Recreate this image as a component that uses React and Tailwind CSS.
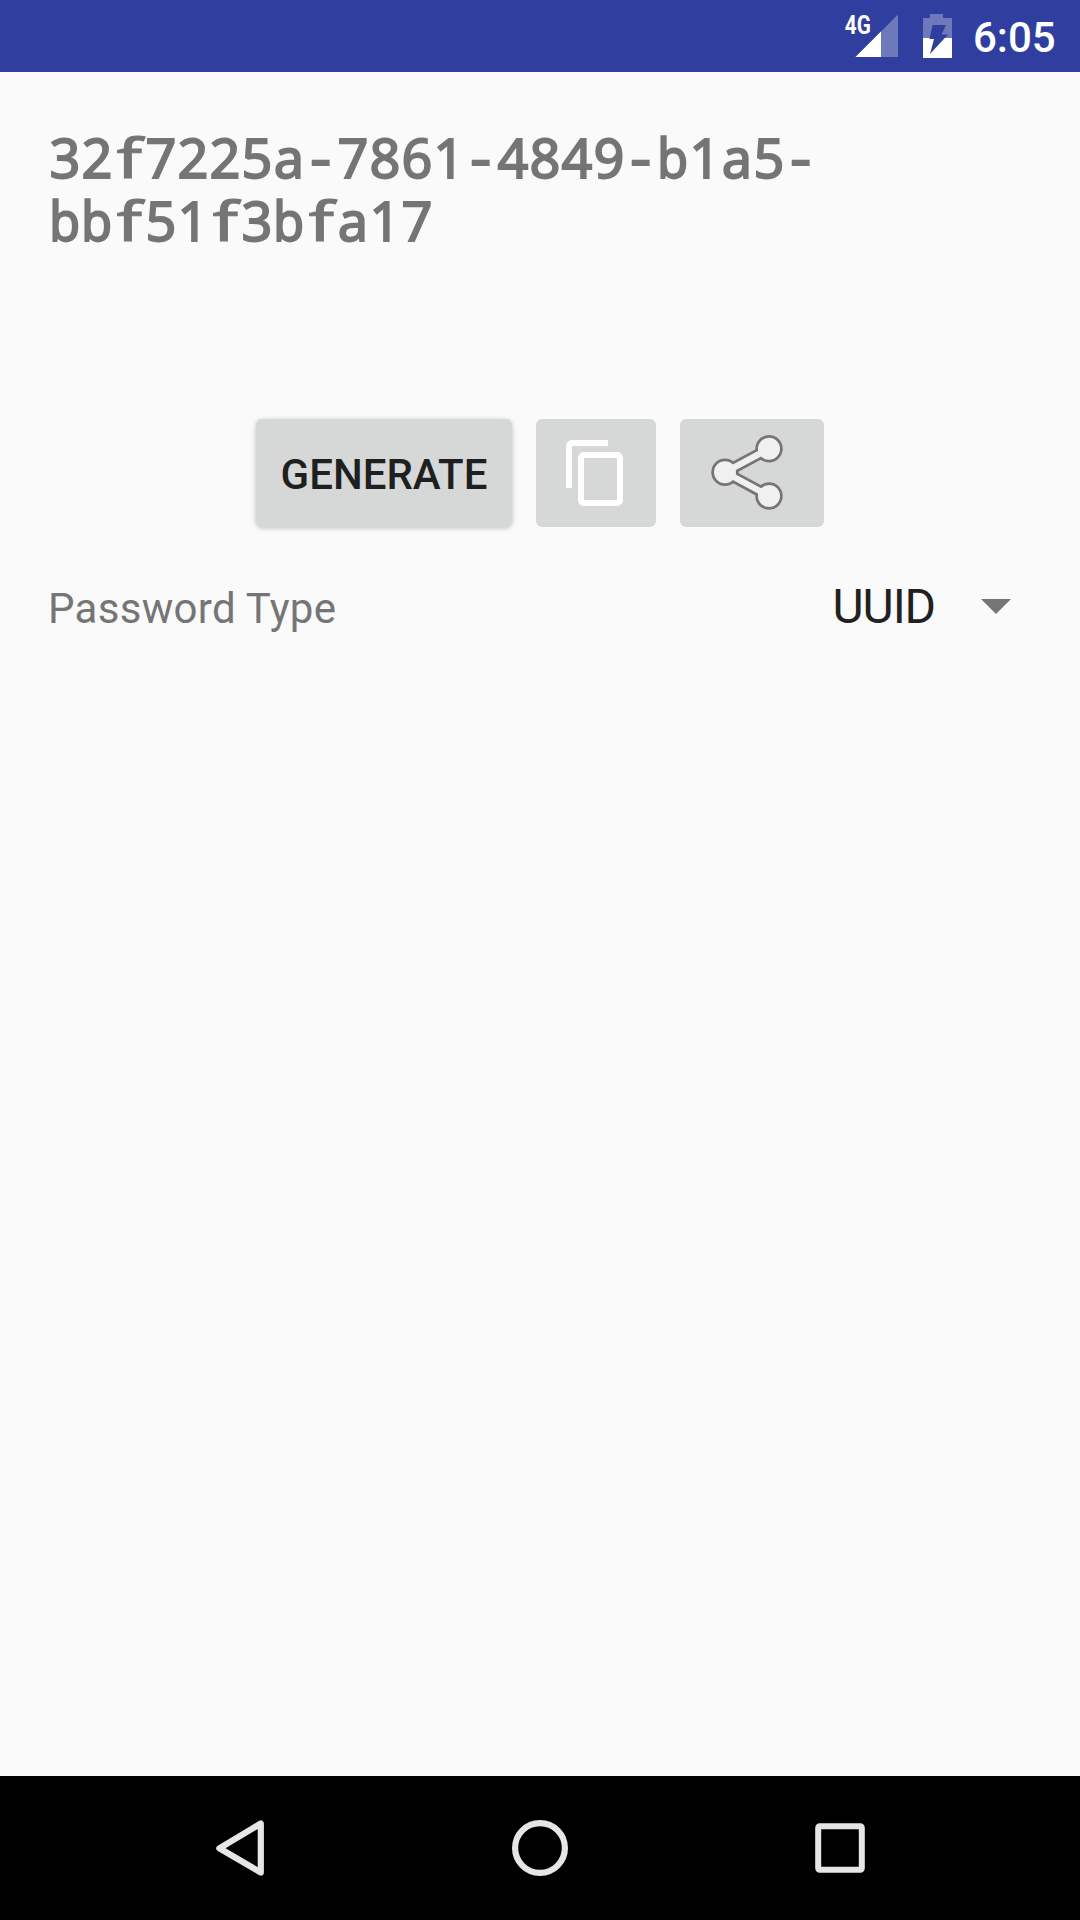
import { useState } from 'react';
import clsx from 'clsx';

const PASSWORD_LINES = ['32f7225a-7861-4849-b1a5-', 'bbf51f3bfa17'];

function StatusBar() {
  return (
    <header className="flex h-[72px] shrink-0 bg-[#303f9f] pl-[842px] font-medium text-white">
      <svg className="h-[72px] w-[120px]" viewBox="842 0 120 72">
        <text
          x="844.8"
          y="33.5"
          textLength="26"
          lengthAdjust="spacingAndGlyphs"
          fill="#fff"
          className="text-[26px] font-bold"
        >
          4G
        </text>
        <path d="M898 14.5V57H855.5z" fill="#fff" fillOpacity="0.3" />
        <path d="M881 31.5V57H855.5z" fill="#fff" />
        <path d="M923 18h7v-4h13v4h9v20h-29z" fill="#fff" fillOpacity="0.3" />
        <path d="M923 38h29v20h-29z" fill="#fff" />
        <path d="M932.5 25H946l-4.5 9.5h6.5L930 54l4-15h-4.5z" fill="#303f9f" />
      </svg>
      <span className="ml-[11px] text-[42px] leading-[76px]">6:05</span>
    </header>
  );
}

// every character sits in a cell of the same width
function Password({ lines }) {
  return (
    <div className="h-[294px] pt-[54px] pl-px font-['Noto_Sans','Open_Sans',sans-serif] text-[54px] leading-[63px] text-[#757575] [-webkit-text-stroke:1.8px_#757575]">
      {lines.map((line) => (
        <div key={line} className="flex">
          {line.split('').map((char, i) => (
            <span key={i} className="flex w-8 justify-center">
              <span
                className={clsx(
                  char === 'f' && 'scale-x-[1.35] [-webkit-text-stroke-width:1.2px]',
                  char === '-' && 'scale-x-[1.2]',
                  char === 'b' && 'scale-x-[0.94]'
                )}
              >
                {char}
              </span>
            </span>
          ))}
        </div>
      ))}
    </div>
  );
}

function CopyIcon() {
  return (
    <svg className="size-[72px]" viewBox="0 0 24 24" fill="#fff">
      <path d="M16 1H4c-1.1 0-2 .9-2 2v14h2V3h12V1zm3 4H8c-1.1 0-2 .9-2 2v14c0 1.1.9 2 2 2h11c1.1 0 2-.9 2-2V7c0-1.1-.9-2-2-2zm0 16H8V7h11v14z" />
    </svg>
  );
}

function ShareIcon() {
  return (
    <svg className="h-[108px] w-[144px]" viewBox="680 419 144 108">
      <path d="M769 448.7L725 472.3L769 496" fill="none" stroke="#757575" strokeWidth="11.6" />
      <g fill="#757575">
        <circle cx="769" cy="448.7" r="13.7" />
        <circle cx="725" cy="472.3" r="13.7" />
        <circle cx="769" cy="496" r="13.7" />
      </g>
      <path d="M769 448.7L725 472.3L769 496" fill="none" stroke="#f0f0f0" strokeWidth="6.2" />
      <g fill="#f0f0f0">
        <circle cx="769" cy="448.7" r="11" />
        <circle cx="725" cy="472.3" r="11" />
        <circle cx="769" cy="496" r="11" />
      </g>
    </svg>
  );
}

function NavBar() {
  return (
    <nav className="flex h-36 shrink-0 items-center justify-center gap-[190px] bg-black">
      <svg className="h-14 w-[110px]" viewBox="185 1820 110 56">
        <path
          d="M260.8 1823.5V1872.5L219.3 1848.3z"
          fill="none"
          stroke="#e6e6e6"
          strokeWidth="6.2"
          strokeLinejoin="round"
        />
      </svg>
      <svg className="h-14 w-[110px]" viewBox="485 1820 110 56">
        <circle cx="540" cy="1848" r="24.9" fill="none" stroke="#e6e6e6" strokeWidth="6.2" />
      </svg>
      <svg className="h-14 w-[110px]" viewBox="785 1820 110 56">
        <rect x="818.2" y="1826.2" width="43.6" height="43.6" rx="1.5" fill="none" stroke="#e6e6e6" strokeWidth="6" />
      </svg>
    </nav>
  );
}

export default function App() {
  const [lines] = useState(PASSWORD_LINES);

  return (
    <div className="flex h-[1920px] w-[1080px] flex-col overflow-hidden bg-[#fafafa] font-['Roboto',sans-serif]">
      <StatusBar />

      <main className="grow px-12">
        <Password lines={lines} />

        <div className="mt-[53px] flex h-[108px] justify-center gap-6">
          <button className="w-64 rounded-md bg-[#d6d7d7] pt-0.5 text-[42px] font-medium text-[#1e1f1f] shadow-[0_1px_5px_rgba(0,0,0,0.24)]">
            GENERATE
          </button>
          <button className="flex w-[120px] items-center justify-center rounded-md bg-[#d6d7d7]">
            <CopyIcon />
          </button>
          <button className="w-36 rounded-md bg-[#d6d7d7]">
            <ShareIcon />
          </button>
        </div>

        <div className="mt-[45px] flex h-[70px] items-baseline justify-between pr-[21px]">
          <span className="text-[42px] leading-[70px] tracking-[0.3px] text-[#757575]">Password Type</span>
          <span className="flex items-center text-[48px] leading-[70px] tracking-[-1.1px] text-[#212121]">
            UUID
            <svg className="mb-0.5 ml-[46px] h-[15px] w-[30px]" viewBox="0 0 30 15">
              <path d="M0 0h30L15 15z" fill="#757575" />
            </svg>
          </span>
        </div>
      </main>

      <NavBar />
    </div>
  );
}
